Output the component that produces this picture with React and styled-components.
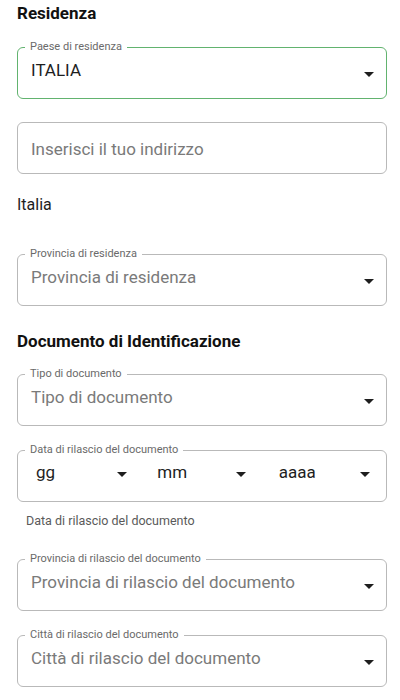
import React from "react";
import styled, { createGlobalStyle } from "styled-components";

const GlobalStyle = createGlobalStyle`
  html, body {
    margin: 0;
    padding: 0;
    background: #ffffff;
  }
  body {
    font-family: Roboto, "Noto Sans", "Liberation Sans", sans-serif;
    -webkit-font-smoothing: antialiased;
  }
  * { box-sizing: border-box; }
`;

const Page = styled.div`
  width: 400px;
  padding: 3px 13px 20px 17px;
  display: flex;
  flex-direction: column;
`;

const SectionTitle = styled.h2`
  margin: ${(p) => p.$gap || 0}px 0 0 0;
  font-size: 17px;
  line-height: 20px;
  font-weight: 700;
  color: #111111;
`;

const PlainText = styled.div`
  margin-top: ${(p) => p.$gap || 0}px;
  font-size: 16px;
  line-height: 20px;
  color: #1e1e1e;
`;

const Helper = styled.div`
  margin-top: ${(p) => p.$gap || 0}px;
  padding-left: 9px;
  font-size: 12.5px;
  line-height: 16px;
  color: #5a5a5a;
`;

const Field = styled.div`
  position: relative;
  margin-top: ${(p) => p.$gap || 0}px;
  height: 52px;
  border: 1px solid ${(p) => (p.$active ? "#62b36f" : "#b9b9b9")};
  border-radius: 6px;
  background: #fff;
  display: flex;
  align-items: flex-start;
  padding: ${(p) => (p.$plain ? 16 : 12)}px 12px 0 13px;
`;

const FloatLabel = styled.span`
  position: absolute;
  top: -7px;
  left: 7px;
  padding: 0 5px;
  background: #fff;
  font-size: 11px;
  line-height: 12px;
  color: #6a6a6a;
  white-space: nowrap;
`;

const Value = styled.span`
  flex: 1;
  font-size: 17px;
  line-height: 20px;
  color: ${(p) => (p.$placeholder ? "#7a7a7a" : "#1e1e1e")};
  white-space: nowrap;
`;

const CaretSvg = styled.svg`
  flex: none;
  width: 10px;
  height: 5px;
  margin-top: ${(p) => p.$offset ?? 12}px;
  fill: #1e1e1e;
`;

const Caret = ({ offset }) => (
  <CaretSvg $offset={offset} viewBox="0 0 10 5" aria-hidden="true">
    <path d="M0 0h10L5 5z" />
  </CaretSvg>
);

const DateRow = styled.div`
  position: relative;
  margin-top: ${(p) => p.$gap || 0}px;
  height: 52px;
  border: 1px solid #b9b9b9;
  border-radius: 6px;
  display: grid;
  grid-template-columns: repeat(3, 1fr);
  column-gap: 30px;
  padding: 11px 16px 0 18px;
`;

const DatePart = styled.div`
  display: flex;
  align-items: flex-start;
  padding-right: ${(p) => p.$trim || 0}px;
`;

const SelectField = ({ label, value, placeholder, active, gap }) => (
  <Field $gap={gap} $active={active}>
    {label && <FloatLabel>{label}</FloatLabel>}
    <Value $placeholder={placeholder}>{value}</Value>
    <Caret offset={12} />
  </Field>
);

export default function App() {
  return (
    <>
      <GlobalStyle />
      <Page>
        <SectionTitle>Residenza</SectionTitle>
        <SelectField gap={24} active label="Paese di residenza" value="ITALIA" />
        <Field $gap={23} $plain>
          <Value $placeholder>Inserisci il tuo indirizzo</Value>
        </Field>
        <PlainText $gap={21}>Italia</PlainText>
        <SelectField
          gap={39}
          label="Provincia di residenza"
          value="Provincia di residenza"
          placeholder
        />

        <SectionTitle $gap={25}>Documento di Identificazione</SectionTitle>
        <SelectField
          gap={23}
          label="Tipo di documento"
          value="Tipo di documento"
          placeholder
        />
        <DateRow $gap={24}>
          <FloatLabel>Data di rilascio del documento</FloatLabel>
          <DatePart>
            <Value>gg</Value>
            <Caret offset={10} />
          </DatePart>
          <DatePart $trim={3}>
            <Value>mm</Value>
            <Caret offset={10} />
          </DatePart>
          <DatePart>
            <Value>aaaa</Value>
            <Caret offset={10} />
          </DatePart>
        </DateRow>
        <Helper $gap={11}>Data di rilascio del documento</Helper>
        <SelectField
          gap={30}
          label="Provincia di rilascio del documento"
          value="Provincia di rilascio del documento"
          placeholder
        />
        <SelectField
          gap={24}
          label="Città di rilascio del documento"
          value="Città di rilascio del documento"
          placeholder
        />
      </Page>
    </>
  );
}
